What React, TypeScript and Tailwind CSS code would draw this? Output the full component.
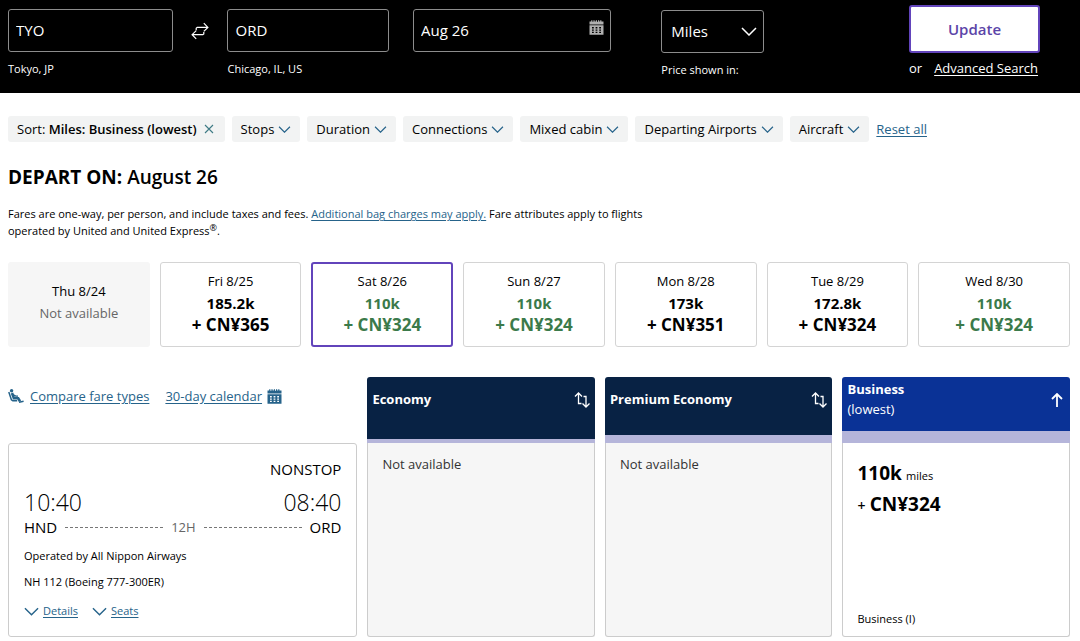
import { useState } from 'react'
import type { ReactNode } from 'react'

type Day = { label: string; miles?: string; cash?: string; low?: boolean }

const days: Day[] = [
  { label: 'Thu 8/24' },
  { label: 'Fri 8/25', miles: '185.2k', cash: '+ CN¥365' },
  { label: 'Sat 8/26', miles: '110k', cash: '+ CN¥324', low: true },
  { label: 'Sun 8/27', miles: '110k', cash: '+ CN¥324', low: true },
  { label: 'Mon 8/28', miles: '173k', cash: '+ CN¥351' },
  { label: 'Tue 8/29', miles: '172.8k', cash: '+ CN¥324' },
  { label: 'Wed 8/30', miles: '110k', cash: '+ CN¥324', low: true },
]

const filters = ['Stops', 'Duration', 'Connections', 'Mixed cabin', 'Departing Airports', 'Aircraft']

const linkClass = 'text-[#26638a] underline underline-offset-2'

function Chevron({ className }: { className: string }) {
  return (
    <svg viewBox="0 0 16 9" fill="none" stroke="currentColor" strokeWidth="1.5" className={className} aria-hidden="true">
      <path d="M1 1l7 7 7-7" />
    </svg>
  )
}

function CalendarIcon({ className }: { className: string }) {
  return (
    <svg viewBox="0 0 15 15" fill="currentColor" className={className} aria-hidden="true">
      <path d="M.5 1.5h1.7V.3h1.2v1.5h1V.3h1.2v1.2h1.2V.3H8v1.5h1V.3h1.2v1.2h1V.3h1.2v1.2h2.1v2.9H.5z" />
      <path
        fillRule="evenodd"
        d="M.5 5.2h14v9.5H.5zM3 7v1.4h1.8V7zm3.6 0v1.4h1.8V7zm3.6 0v1.4H12V7zM3 9.4v1.4h1.8V9.4zm3.6 0v1.4h1.8V9.4zm3.6 0v1.4H12V9.4zM3 11.8v1.2h1.8v-1.2zm3.6 0v1.2h1.8v-1.2zm3.6 0v1.2H12v-1.2z"
      />
    </svg>
  )
}

function SwapIcon() {
  return (
    <svg viewBox="0 0 18 18" fill="none" stroke="currentColor" strokeWidth="1.2" className="h-[18px] w-[18px]" aria-hidden="true">
      <path d="M5.2 8.2V6.2L6.2 5.4H16.6M12.8 1.2l4.1 4.2-4.1 4" />
      <path d="M12.8 9.9v2l-1 .8H1.4M5.2 8.6l-4.1 4.1 4.1 4.2" />
    </svg>
  )
}

function SeatIcon() {
  return (
    <svg viewBox="0 0 16 14" fill="none" stroke="currentColor" className="h-[14px] w-4" aria-hidden="true">
      <circle cx="3.6" cy="1.8" r="1.7" fill="currentColor" stroke="none" />
      <path d="M4 4l1.9 5.3h4.3l1.8 2.9" strokeWidth="2.6" />
      <path d="M5 5.6l2.8 1.5h2.2" strokeWidth="1.3" />
      <path d="M.8 3l2.6 7.8 1.4.9h4.4M11 13.2l4.6-1" strokeWidth="1.5" />
    </svg>
  )
}

function SortIcon() {
  return (
    <svg viewBox="0 0 16 16" fill="none" stroke="currentColor" strokeWidth="1.3" className="h-4 w-4" aria-hidden="true">
      <path d="M1 4.5L4.5 1 8 4.5M4.5 1v10.5h3" />
      <path d="M8.5 11.5L12 15l3.5-3.5M12 15V4.5H9.5" />
    </svg>
  )
}

function ArrowUp() {
  return (
    <svg viewBox="0 0 12 14" fill="none" stroke="currentColor" strokeWidth="1.8" className="h-[14px] w-3" aria-hidden="true">
      <path d="M1 6l5-5 5 5M6 1v13" />
    </svg>
  )
}

function Field({ id, value, hint, children }: { id: string; value: string; hint?: string; children?: ReactNode }) {
  return (
    <div>
      <div className="relative">
        <input
          id={id}
          defaultValue={value}
          aria-label={hint ?? 'Departure date'}
          className="block h-[43px] w-full rounded-[3px] border border-[#8c8c8c] bg-black px-[7px] pb-[2px] text-[15px]"
        />
        {children}
      </div>
      {hint && (
        <label htmlFor={id} className="mt-2 block text-[11px] leading-[18px]">
          {hint}
        </label>
      )}
    </div>
  )
}

function SearchBar() {
  return (
    <form
      onSubmit={(e) => e.preventDefault()}
      className="grid h-[93px] grid-cols-[166fr_54px_162fr_24px_199fr_50px_103fr_145px_171px] bg-black pl-2 text-white"
    >
      <div className="pt-[9px]">
        <Field id="from" value="TYO" hint="Tokyo, JP" />
      </div>
      <button type="button" aria-label="Swap airports" className="flex justify-center pt-[22px]">
        <SwapIcon />
      </button>
      <div className="pt-[9px]">
        <Field id="to" value="ORD" hint="Chicago, IL, US" />
      </div>
      <div />
      <div className="pt-[9px]">
        <Field id="date" value="Aug 26">
          <CalendarIcon className="absolute top-[11px] right-[7px] h-[15px] w-[15px] text-[#b0b0b0]" />
        </Field>
      </div>
      <div />
      <div className="pt-[10px]">
        <div className="relative">
          <select
            id="currency"
            className="block h-[43px] w-full appearance-none rounded-[3px] border border-[#8c8c8c] bg-black px-[9px] text-[15px]"
          >
            <option>Miles</option>
            <option>Money</option>
          </select>
          <Chevron className="pointer-events-none absolute top-[17px] right-[7px] h-[9px] w-4" />
        </div>
        <label htmlFor="currency" className="mt-2 block text-[11px] leading-[18px]">
          Price shown in:
        </label>
      </div>
      <div />
      <div className="pt-[5px]">
        <button type="submit" className="block h-12 w-[131px] rounded-[3px] border-2 border-[#6244bb] bg-white text-[15px] font-semibold text-[#5b45a8]">
          Update
        </button>
        <p className="mt-[5px] text-[13px] leading-5">
          or
          <a href="#advanced" className="ml-3 underline underline-offset-2">
            Advanced Search
          </a>
        </p>
      </div>
    </form>
  )
}

function FilterBar() {
  return (
    <div className="flex items-center gap-[7px] px-2 pt-[23px] text-[13px] leading-[26px]">
      <button className="flex items-center gap-[7px] rounded-[3px] bg-[#f2f3f3] pr-[11px] pl-[9px]">
        <span>
          Sort: <b className="font-semibold">Miles: Business (lowest)</b>
        </span>
        <svg viewBox="0 0 10 10" stroke="currentColor" strokeWidth="1.1" className="h-[10px] w-[10px] text-[#3e7a85]" aria-hidden="true">
          <path d="M1 1l8 8M9 1l-8 8" />
        </svg>
      </button>
      {filters.map((name) => (
        <button key={name} className="flex items-center gap-1 rounded-[3px] bg-[#f2f3f3] px-[9px]">
          {name}
          <Chevron className="h-[7px] w-[13px] text-[#26638a]" />
        </button>
      ))}
      <a href="#reset" className={linkClass}>
        Reset all
      </a>
    </div>
  )
}

function DayCard({ day, selected, onSelect }: { day: Day; selected: boolean; onSelect: () => void }) {
  if (!day.miles) {
    return (
      <div className="flex flex-col items-center justify-center rounded-[3px] bg-[#f6f6f6] pb-[6px] text-[13px] leading-[22px]">
        <span>{day.label}</span>
        <span className="text-[#666]">Not available</span>
      </div>
    )
  }
  const priceColor = day.low ? 'text-[#3b7a4a]' : 'text-black'
  return (
    <button
      onClick={onSelect}
      className={`flex h-[85px] flex-col items-center justify-center rounded-[3px] pb-1 leading-[22px] ${selected ? 'border-2 border-[#6244bb]' : 'border border-[#d4d4d4]'}`}
    >
      <span className="text-[13px]">{day.label}</span>
      <span className={`text-[15px] font-bold ${priceColor}`}>{day.miles}</span>
      <span className={`text-[17px] font-bold ${priceColor}`}>{day.cash}</span>
    </button>
  )
}

function FlightCard() {
  return (
    <article className="h-full rounded-[3px] border border-[#ccc] px-[15px] pt-[15px]">
      <p className="text-right text-[15px] leading-5">NONSTOP</p>
      <div className="mt-[9px] flex justify-between text-[23px] leading-[29px] font-light">
        <span>10:40</span>
        <span>08:40</span>
      </div>
      <div className="flex items-center gap-2 text-[15px] leading-5">
        <span>HND</span>
        <span className="flex-1 border-t border-dashed border-[#777]" />
        <span className="text-[13px] text-[#666]">12H</span>
        <span className="flex-1 border-t border-dashed border-[#777]" />
        <span>ORD</span>
      </div>
      <p className="mt-[10px] text-[11px] leading-[18px]">Operated by All Nippon Airways</p>
      <p className="mt-2 text-[11px] leading-[18px]">NH 112 (Boeing 777-300ER)</p>
      <div className="mt-[11px] flex gap-[14px] text-[11px] leading-[18px] text-[#26638a]">
        {['Details', 'Seats'].map((name) => (
          <a key={name} href={`#${name.toLowerCase()}`} className="flex items-center gap-1 underline underline-offset-2">
            <Chevron className="h-[9px] w-[15px]" />
            {name}
          </a>
        ))}
      </div>
    </article>
  )
}

export default function App() {
  const [selected, setSelected] = useState('Sat 8/26')

  return (
    <div className="bg-white font-['Open_Sans','Noto_Sans',sans-serif] text-black">
      <SearchBar />
      <FilterBar />

      <main className="pr-[10px] pl-2">
        <h1 className="mt-[21px] text-[19px] leading-7 font-semibold">
          <b className="font-bold">DEPART ON:</b> August 26
        </h1>
        <p className="mt-[14px] max-w-[672px] text-[11px] leading-[17px]">
          Fares are one-way, per person, and include taxes and fees.{' '}
          <a href="#bags" className={linkClass}>
            Additional bag charges may apply.
          </a>{' '}
          Fare attributes apply to flights operated by United and United Express
          <sup className="text-[9px] leading-none">®</sup>.
        </p>

        <section className="mt-[23px] grid grid-cols-[repeat(6,142fr)_152fr] gap-[10px]">
          {days.map((day) => (
            <DayCard key={day.label} day={day} selected={day.label === selected} onSelect={() => setSelected(day.label)} />
          ))}
        </section>

        <table className="mt-[30px] w-full table-fixed border-separate border-spacing-0">
          <colgroup>
            <col className="w-[32.9%]" />
            <col />
            <col />
            <col />
          </colgroup>
          <thead>
            <tr className="h-[66px] text-left text-[13px]">
              <td className="pb-[28px]">
                <div className="flex items-center leading-5 text-[#26638a]">
                  <SeatIcon />
                  <a href="#compare" className="ml-[6px] underline underline-offset-2">
                    Compare fare types
                  </a>
                  <a href="#calendar" className="ml-4 flex items-center gap-[5px] underline underline-offset-2">
                    30-day calendar
                    <CalendarIcon className="h-[15px] w-[15px]" />
                  </a>
                </div>
              </td>
              <th className="pl-[10px] font-bold">
                <div className="flex h-[66px] items-start justify-between rounded-t-[3px] border-b-4 border-[#b5b5da] bg-[#082244] px-[5px] pt-[11px] leading-[22px] text-white">
                  Economy
                  <button aria-label="Sort by Economy" className="pt-1">
                    <SortIcon />
                  </button>
                </div>
              </th>
              <th className="pl-[10px] font-bold">
                <div className="flex h-[66px] items-start justify-between rounded-t-[3px] border-b-8 border-[#b5b5da] bg-[#082244] px-[5px] pt-[11px] leading-[22px] text-white">
                  Premium Economy
                  <button aria-label="Sort by Premium Economy" className="pt-1">
                    <SortIcon />
                  </button>
                </div>
              </th>
              <th className="pl-[10px] font-bold">
                <div className="flex h-[66px] items-start justify-between rounded-t-[3px] border-b-12 border-[#b5b5da] bg-[#0a3296] px-[5px] pt-[2px] leading-5 text-white">
                  <span>
                    Business
                    <span className="block font-normal">(lowest)</span>
                  </span>
                  <button aria-label="Sort by Business" className="pt-[14px] pr-[2px]">
                    <ArrowUp />
                  </button>
                </div>
              </th>
            </tr>
          </thead>
          <tbody>
            <tr className="h-[194px] align-top">
              <td className="h-[194px]">
                <FlightCard />
              </td>
              <td className="h-[194px] pl-[10px]">
                <div className="h-full rounded-b-[3px] border border-t-0 border-[#ccc] bg-[#f6f6f6] px-[14px] pt-[11px] text-[13px] leading-5 text-[#333]">
                  Not available
                </div>
              </td>
              <td className="h-[194px] pl-[10px]">
                <div className="h-full rounded-b-[3px] border border-t-0 border-[#ccc] bg-[#f6f6f6] px-[14px] pt-[11px] text-[13px] leading-5 text-[#333]">
                  Not available
                </div>
              </td>
              <td className="h-[194px] pl-[10px]">
                <div className="flex h-full flex-col rounded-b-[3px] border border-t-0 border-[#ccc] px-[14px] pt-4 pb-2">
                  <p className="leading-7">
                    <b className="text-[19px]">110k</b> <span className="text-[11px]">miles</span>
                  </p>
                  <p className="leading-7">
                    <span className="text-sm font-semibold">+</span> <b className="text-[19px]">CN¥324</b>
                  </p>
                  <p className="mt-auto text-[11px] leading-[18px]">Business (I)</p>
                </div>
              </td>
            </tr>
          </tbody>
        </table>
      </main>
    </div>
  )
}
